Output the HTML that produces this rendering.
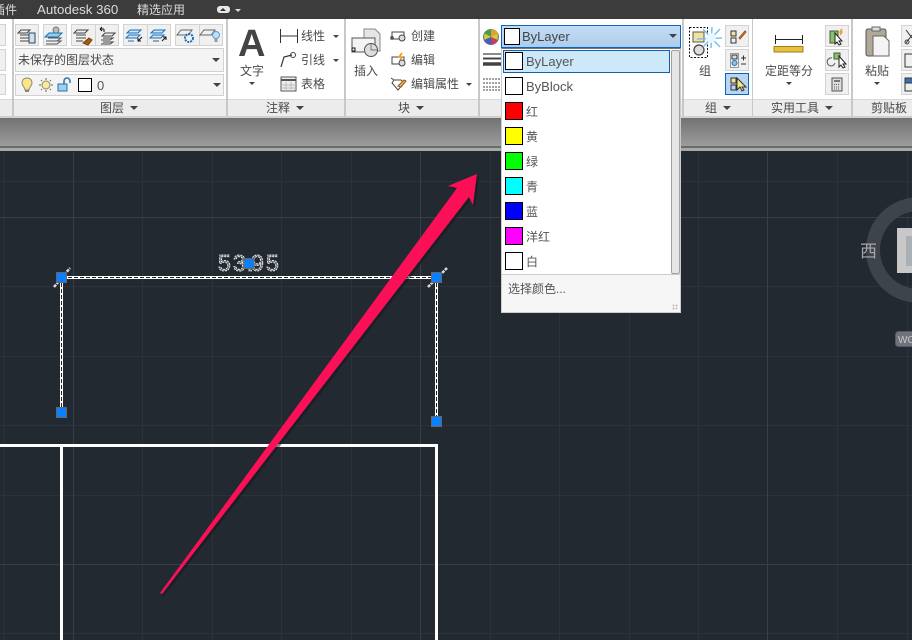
<!DOCTYPE html>
<html><head><meta charset="utf-8">
<style>
html,body{margin:0;padding:0;background:#222931}
#r{position:relative;width:912px;height:640px;overflow:hidden;background:#222931;font-family:"Liberation Sans","Noto Sans CJK SC",sans-serif;font-size:12px;color:#444}
.a{position:absolute;white-space:nowrap}
.t{position:absolute;white-space:nowrap;line-height:16px;color:#4a4a4a}
.b{position:absolute;box-sizing:border-box;background:#f0f0f0;border:1px solid #d2d2d2}
.it{position:absolute;left:526px;line-height:16px;color:#555;white-space:nowrap}
.l{font-size:13px}
.pt{position:absolute;top:100px;line-height:16px;color:#4a4a4a;white-space:nowrap}
.tri{position:absolute;width:0;height:0;border-left:4px solid transparent;border-right:4px solid transparent;border-top:4px solid #444}
.tri2{position:absolute;width:0;height:0;border-left:3px solid transparent;border-right:3px solid transparent;border-top:3px solid #444}
svg{position:absolute;left:0;top:0}
</style></head><body><div id="r">

<!-- title bar -->
<div class="a" style="left:0;top:0;width:912px;height:19px;background:#3c3c3c"></div>
<div class="a" style="left:-7px;top:2px;color:#dcdcdc;line-height:16px">插件</div>
<div class="a" style="left:37px;top:2px;color:#dcdcdc;line-height:16px;font-size:13.300px">Autodesk 360</div>
<div class="a" style="left:137px;top:2px;color:#dcdcdc;line-height:16px">精选应用</div>
<div class="a" style="left:217px;top:6px;width:13px;height:7px;background:#e8e8e8;border-radius:3px"></div>
<div class="tri" style="left:220px;top:8px;border-top:0;border-bottom:3px solid #333;border-left-width:3px;border-right-width:3px"></div>
<div class="tri2" style="left:235px;top:9px;border-top-color:#ddd"></div>

<!-- ribbon -->
<div class="a" style="left:0;top:19px;width:912px;height:99px;background:#fff"></div>
<div class="a" style="left:0;top:99px;width:912px;height:17px;background:#ececec;border-top:1px solid #d8d8d8;box-sizing:border-box"></div>
<div class="a" style="left:0;top:116px;width:912px;height:2px;background:#d0d0d0"></div>
<div class="a" style="left:0;top:118px;width:912px;height:28px;background:linear-gradient(#727272,#9c9c9c)"></div>
<div class="a" style="left:0;top:146px;width:912px;height:2px;background:#6a6a6a"></div>
<div class="a" style="left:0;top:148px;width:912px;height:3px;background:#a8a8a8"></div>
<!-- dividers -->
<div class="a" style="left:12px;top:19px;width:2px;height:97px;background:#c8c8c8"></div>
<div class="a" style="left:226px;top:19px;width:2px;height:97px;background:#c8c8c8"></div>
<div class="a" style="left:344px;top:19px;width:2px;height:97px;background:#c8c8c8"></div>
<div class="a" style="left:478px;top:19px;width:2px;height:97px;background:#c8c8c8"></div>
<div class="a" style="left:682px;top:19px;width:2px;height:97px;background:#c8c8c8"></div>
<div class="a" style="left:752px;top:19px;width:1px;height:97px;background:#c8c8c8"></div>
<div class="a" style="left:851px;top:19px;width:2px;height:97px;background:#c8c8c8"></div>

<!-- left cut buttons -->
<div class="b" style="left:-3px;top:24px;width:9px;height:22px"></div>
<div class="b" style="left:-3px;top:49px;width:9px;height:22px"></div>
<div class="b" style="left:-3px;top:74px;width:9px;height:21px"></div>

<!-- layer buttons -->
<div class="b" style="left:15px;top:24px;width:24px;height:22px"></div>
<div class="b" style="left:43px;top:24px;width:24px;height:22px"></div>
<div class="b" style="left:71px;top:24px;width:25px;height:22px"></div>
<div class="b" style="left:95px;top:24px;width:24px;height:22px"></div>
<div class="b" style="left:123px;top:24px;width:25px;height:22px"></div>
<div class="b" style="left:147px;top:24px;width:24px;height:22px"></div>
<div class="b" style="left:175px;top:24px;width:25px;height:22px"></div>
<div class="b" style="left:199px;top:24px;width:24px;height:22px"></div>
<div class="b" style="left:15px;top:48px;width:209px;height:24px;background:#f4f4f4"></div>
<div class="t" style="left:18px;top:52px">未保存的图层状态</div>
<div class="tri" style="left:212px;top:58px"></div>
<div class="b" style="left:15px;top:74px;width:209px;height:22px;background:#f4f4f4"></div>
<div class="a" style="left:78px;top:78px;width:14px;height:14px;box-sizing:border-box;border:1px solid #000;background:#fff"></div>
<div class="t l" style="left:97px;top:78px;color:#555">0</div>
<div class="tri" style="left:213px;top:83px"></div>
<div class="pt" style="left:100px">图层</div><div class="tri" style="left:130px;top:106px"></div>

<!-- annotation -->
<div class="a" style="left:238px;top:21px;font-size:38px;font-weight:bold;line-height:46px;color:#444">A</div>
<div class="t" style="left:240px;top:63px">文字</div><div class="tri2" style="left:249px;top:82px"></div>
<div class="t" style="left:301px;top:28px">线性</div><div class="tri2" style="left:333px;top:35px"></div>
<div class="t" style="left:301px;top:52px">引线</div><div class="tri2" style="left:333px;top:59px"></div>
<div class="t" style="left:301px;top:76px">表格</div>
<div class="pt" style="left:266px">注释</div><div class="tri" style="left:296px;top:106px"></div>

<!-- block -->
<div class="t" style="left:354px;top:63px">插入</div>
<div class="t" style="left:411px;top:28px">创建</div>
<div class="t" style="left:411px;top:52px">编辑</div>
<div class="t" style="left:411px;top:76px">编辑属性</div><div class="tri2" style="left:466px;top:83px"></div>
<div class="pt" style="left:398px">块</div><div class="tri" style="left:416px;top:106px"></div>

<!-- group -->
<div class="t" style="left:699px;top:63px">组</div>
<div class="b" style="left:725px;top:25px;width:24px;height:22px"></div>
<div class="b" style="left:725px;top:49px;width:24px;height:22px"></div>
<div class="b" style="left:725px;top:73px;width:24px;height:22px;background:#b8d6f2;border-color:#0a64c0"></div>
<div class="pt" style="left:705px">组</div><div class="tri" style="left:723px;top:106px"></div>

<!-- utilities -->
<div class="t" style="left:765px;top:63px">定距等分</div><div class="tri2" style="left:786px;top:82px"></div>
<div class="b" style="left:825px;top:25px;width:24px;height:22px"></div>
<div class="b" style="left:825px;top:49px;width:24px;height:22px"></div>
<div class="b" style="left:825px;top:73px;width:24px;height:22px"></div>
<div class="pt" style="left:771px">实用工具</div><div class="tri" style="left:825px;top:106px"></div>

<!-- clipboard -->
<div class="t" style="left:865px;top:63px">粘贴</div><div class="tri2" style="left:874px;top:82px"></div>
<div class="b" style="left:901px;top:25px;width:24px;height:22px"></div>
<div class="b" style="left:901px;top:49px;width:24px;height:22px"></div>
<div class="b" style="left:901px;top:73px;width:24px;height:22px"></div>
<div class="pt" style="left:871px">剪贴板</div>

<!-- ribbon icons -->
<svg width="912" height="152" viewBox="0 0 912 152" fill="none" stroke="#444" stroke-width="1">
 <!-- layer row -->
 <path d="M21 30h9l-3 3h-9zM20 35h9M20 38h9M20 41h9"/><rect x="29" y="33" width="6" height="10" fill="#cfe0f0" stroke="#345"/>
 <path d="M49 33h13l-4 4h-13z" fill="#8fd0f0" stroke="#1a70b8"/><path d="M48 38h13l-4 3h-11M48 41h13l-4 3h-11" stroke="#555"/><circle cx="56" cy="30" r="3" fill="#bbb" stroke="#777"/>
 <path d="M77 30h11l-3 3h-11zM76 35h10M76 38h10M76 41h7"/><path d="M83 43l6-5 3 2-4 5z" fill="#a85a10" stroke="#7a400a"/>
 <path d="M100 29h4M100 29l2-2M100 29l2 2M104 29v3" stroke="#111"/><path d="M105 33h10l-3 3h-10zM103 38h10l-3 2h-9M103 42h10l-3 2h-9"/>
 <path d="M130 30h11l-3 3h-11z" stroke="#1a70b8" fill="#cfe4f6"/><path d="M129 35h11l-3 3h-11z" stroke="#1a70b8" fill="#cfe4f6"/><path d="M128 41h6" stroke="#1a70b8"/><path d="M142 37l-4 4M138 38v3h3" stroke="#111"/>
 <path d="M154 30h11l-3 3h-11z" stroke="#1a70b8" fill="#cfe4f6"/><path d="M153 35h11l-3 3h-11z" stroke="#1a70b8" fill="#cfe4f6"/><path d="M153 41h6" stroke="#555"/><path d="M162 41l4-4M163 37h3v3" stroke="#111"/>
 <path d="M181 30h11l-4 5h-11z" stroke="#666"/><circle cx="189" cy="38" r="4" stroke="#1a70b8" stroke-dasharray="2 1" stroke-width="2"/>
 <path d="M204 30h11l-4 5h-11z" stroke="#666"/><circle cx="216" cy="35" r="3.500" fill="#bfe0f8" stroke="#5a9ad0"/><rect x="214.500" y="39" width="3" height="3" fill="#999" stroke="none"/>
 <!-- light / sun / lock -->
 <path d="M27 78c-4 0-5 3-5 5 0 3 3 4 3 7h4c0-3 3-4 3-7 0-2-1-5-5-5z" fill="#fbe58a" stroke="#8a8a60"/><rect x="25" y="90" width="4" height="2" fill="#888" stroke="none"/>
 <circle cx="46" cy="85" r="4" fill="#fbe9a0" stroke="#8a8a60"/><path d="M46 78v2M46 90v2M39 85h2M51 85h2M41 80l1 1M50 89l1 1M41 90l1-1M50 81l1-1" stroke="#666"/>
 <rect x="58" y="84" width="9" height="7" fill="#9fd0ef" stroke="#2a70a8"/><path d="M64 84v-3a3 3 0 0 1 6 0v2" stroke="#2a70a8" stroke-width="1.500"/>
 <!-- dim -->
 <path d="M280.500 29v14M297.500 29v14M281 36h16" stroke="#333"/>
 <path d="M281 67l3-10 8-2" stroke="#333" stroke-width="1.200"/><circle cx="293" cy="55" r="2.500"/>
 <rect x="281" y="77" width="15" height="14" fill="#eee" stroke="#555"/><path d="M281 80h15" stroke="#555" stroke-width="2"/><path d="M286 82v9M291 82v9M281 85h15M281 88h15" stroke="#bbb"/>
 <!-- insert -->
 <path d="M364 29h11l5 5v17h-16z" fill="#e6e6e6" stroke="#888"/>
 <rect x="352" y="38" width="23" height="14" fill="#f4f4f4" stroke="#555"/><rect x="352" y="48" width="3" height="3" fill="#fff" stroke="#111"/><circle cx="371" cy="50" r="6.500" fill="#ddd" stroke="#555"/><path d="M371 44v6h6" stroke="#777"/>
 <rect x="392" y="32" width="12" height="7" stroke="#444"/><circle cx="402" cy="38" r="3" fill="#ddd"/><rect x="391" y="37" width="2" height="2" fill="#fff" stroke="#111"/>
 <rect x="392" y="57" width="12" height="7" stroke="#444"/><circle cx="402" cy="63" r="3" fill="#ddd"/><path d="M402 53l-3 4h3l-2 3" stroke="#e89a10" stroke-width="1.500"/>
 <path d="M391 78l3 2M394 80h7l3 3-6 7-6-7z" stroke="#444"/><path d="M398 86l6-6 2 1-5 6z" fill="#f0c040" stroke="#a05020"/>
 <!-- color & line icons -->
 <circle cx="491" cy="37" r="7.500" fill="#d6c83a" stroke="#777"/><path d="M491 37L484 33A8 8 0 0 1 491 29.500z" fill="#40a050" stroke="none"/><path d="M491 37L484 40A8 8 0 0 0 491 44.500z" fill="#4060c0" stroke="none"/><path d="M491 37L498 40A8 8 0 0 1 491 44.500z" fill="#c04060" stroke="none"/><path d="M491 37L491 29.500A8 8 0 0 1 498 33z" fill="#e0a030" stroke="none"/>
 <path d="M483 54h18" stroke-width="1.300"/><path d="M483 58.500h18" stroke-width="2"/><path d="M483 64h18" stroke-width="3.500"/>
 <path d="M483 79h18M483 83h18M483 87h18M483 90h18" stroke-dasharray="2 1"/>
 <!-- group -->
 <rect x="689.500" y="27.500" width="18" height="30" stroke="#111" stroke-dasharray="2 1.500"/>
 <rect x="693" y="32" width="11" height="10" fill="#efe29a" stroke="#555"/><circle cx="699" cy="50" r="5" fill="#ddd" stroke="#444" stroke-width="1.300"/>
 <path d="M697 39l25-1M712 27l-1 21M703 29l17 18M720 29l-17 18" stroke="#7cc0ee" stroke-width="1.500"/><circle cx="711" cy="38" r="5" fill="#e8f6ff" stroke="none"/>
 <rect x="731" y="31" width="5" height="5" fill="#efe29a" stroke="#333"/><rect x="731" y="38" width="5" height="5" stroke="#333"/><path d="M739 38l6-7 1 1-6 7z" fill="#e0a030" stroke="#a05020"/>
 <rect x="730.500" y="53.500" width="8" height="14" stroke="#444" stroke-dasharray="1 1"/><rect x="732" y="55" width="5" height="4" fill="#ddd" stroke="#333"/><circle cx="734.500" cy="63" r="2.500" fill="#8cc0ea" stroke="#2a70a8"/><path d="M741 58h5M743.500 55.500v5M741 64h5" stroke="#333"/>
 <rect x="731" y="78" width="5" height="5" fill="#efe29a" stroke="#333"/><rect x="731" y="85" width="5" height="5" stroke="#333"/><path d="M737 78v12l3-3 2 4 2-1-2-3h4z" fill="#f5e97a" stroke="#333"/>
 <!-- util -->
 <path d="M775.500 35v9M802.500 35v9M775 39.500h27" stroke="#222"/><rect x="774" y="46.500" width="29" height="5.500" fill="#e8c040" stroke="#a08020"/>
 <rect x="830" y="31" width="8" height="12" fill="#8cc070" stroke="#406030"/><path d="M835 33v11l2-2 2 3 2-1-2-3h3z" fill="#fff" stroke="#222"/><path d="M842 29l-2 3h2l-2 3" stroke="#e89a10" stroke-width="1.300"/>
 <rect x="834" y="53" width="6" height="6" fill="#8cc070" stroke="#406030"/><path d="M832 58a4 4 0 1 0 3 5" stroke="#555"/><path d="M839 56v11l2-2 2 3 2-1-2-3h3z" fill="#fff" stroke="#222"/>
 <rect x="832" y="78" width="10" height="13" fill="#ddd" stroke="#555"/><rect x="834" y="80" width="6" height="2" fill="#777" stroke="none"/><path d="M834 84.500h6M834 87h6M834 89h6" stroke="#666" stroke-dasharray="1 1"/>
 <!-- paste -->
 <rect x="866" y="29" width="20" height="27" rx="2" fill="#b0a898" stroke="#555"/><rect x="872" y="27" width="8" height="4" fill="#ddd" stroke="#666"/>
 <path d="M873 36h11l5 5v15h-16z" fill="#f4f4f4" stroke="#666"/>
 <path d="M906 30l6 8M906 43l6-8" stroke="#333"/><circle cx="907" cy="42" r="2"/>
 <rect x="905" y="54" width="10" height="13" stroke="#333"/>
 <rect x="905" y="78" width="10" height="5" fill="#3a70a8" stroke="#333"/><rect x="905" y="83" width="10" height="8" fill="#eee" stroke="#333"/>
</svg>

<!-- canvas -->
<svg width="912" height="640" viewBox="0 0 912 640" style="top:0;left:0;pointer-events:none">
 <g stroke="#2c323c" stroke-width="1">
  <path d="M4 152V640M142.500 152V640M212.500 152V640M281.500 152V640M351.500 152V640M490.500 152V640M559.500 152V640M629.500 152V640M698.500 152V640M837.500 152V640M907.500 152V640"/>
  <path d="M0 181.500H912M0 286.500H912M0 356.500H912M0 425.500H912M0 495.500H912M0 633.500H912"/>
 </g>
 <g stroke="#383e4a" stroke-width="1">
  <path d="M73.500 152V640M420.500 152V640M767.500 152V640"/>
  <path d="M0 217.500H912M0 564.500H912"/>
 </g>
 <!-- compass -->
 <circle cx="919" cy="250" r="46" fill="none" stroke="#3e444c" stroke-width="14"/>
 <rect x="897" y="228" width="20" height="45" fill="#c8c8c8"/><rect x="906" y="236" width="10" height="30" fill="#a9b0b6"/>
 <rect x="895.500" y="331.500" width="24" height="15" rx="3" fill="#70727c" stroke="#565862"/>
 <text x="898" y="343" font-family="Liberation Sans" font-size="10" fill="#c8c8c8">WC</text>
 <text x="860" y="257" font-family="Liberation Sans,Noto Sans CJK SC" font-size="17" fill="#a8a8a8">西</text>

 <!-- white geometry -->
 <path d="M0 445.500H438M61.500 445V640M436.500 445V640" stroke="#fff" stroke-width="3" fill="none"/>

 <!-- dim text -->
 <text x="218 233 247 251 266" y="271" font-family="Liberation Sans" font-size="23" fill="#f0f0f0" fill-opacity=".35" stroke="#eeeeee" stroke-width=".9" stroke-dasharray="2 1">53.95</text>

 <!-- selected lines -->
 <path d="M62 277.500H436" stroke="#fff" stroke-width="3"/>
 <path d="M62 277.500H436" stroke="#222" stroke-width="1" stroke-dasharray="4 2"/>
 <path d="M61.500 277V412M436.500 277V421" stroke="#fff" stroke-width="3"/>
 <path d="M61.500 277V412M436.500 277V421" stroke="#222" stroke-width="1" stroke-dasharray="4 2"/>
 <path d="M54 287l16-19M428 287l19-19" stroke="#ddd" stroke-width="2.500" stroke-dasharray="3 1"/>
 <g fill="#0a80ff" stroke="#666" stroke-width="1">
  <rect x="56.500" y="272.500" width="10" height="10"/>
  <rect x="244" y="258.500" width="10" height="10"/>
  <rect x="431.500" y="272.500" width="10" height="10"/>
  <rect x="56.500" y="407.500" width="10" height="10"/>
  <rect x="431.500" y="416.500" width="10" height="10"/>
 </g>

 <!-- arrow -->
 <polygon points="162,596 164,596 471,199 475,207 479,176 450,188 459,190" fill="#15181c" opacity=".55"/>
 <polygon points="160,593 162,594 469,197 473,205 477,174 448,186 457,188" fill="#fb1058"/>
</svg>

<!-- color combo -->
<div class="a" style="left:501px;top:25px;width:180px;height:23px;box-sizing:border-box;background:linear-gradient(#c2dcf4,#aecdec);border:1px solid #0a64c0"></div>
<div class="a" style="left:504px;top:28px;width:16px;height:17px;box-sizing:border-box;border:1px solid #000;background:#fff"></div>
<div class="t l" style="left:522px;top:29px;color:#444">ByLayer</div>
<div class="tri" style="left:669px;top:34px"></div>

<!-- dropdown -->
<div class="a" style="left:501px;top:48px;width:180px;height:265px;box-sizing:border-box;background:#fff;border:1px solid #ccc;border-top:1px solid #777"></div>
<div class="a" style="left:503px;top:50px;width:167px;height:23px;box-sizing:border-box;background:#cde8f8;border:1px solid #1060b0"></div>
<div class="a" style="left:671px;top:50px;width:9px;height:224px;box-sizing:border-box;background:#e6e6e6;border:1px solid #a0a0a0;border-radius:2px"></div>
<div class="a" style="left:505px;top:52px;width:18px;height:18px;box-sizing:border-box;border:1px solid #000;background:#fff"></div>
<div class="a" style="left:505px;top:77px;width:18px;height:18px;box-sizing:border-box;border:1px solid #000;background:#fff"></div>
<div class="a" style="left:505px;top:102px;width:18px;height:18px;box-sizing:border-box;border:1px solid #000;background:#f00"></div>
<div class="a" style="left:505px;top:127px;width:18px;height:18px;box-sizing:border-box;border:1px solid #000;background:#ff0"></div>
<div class="a" style="left:505px;top:152px;width:18px;height:18px;box-sizing:border-box;border:1px solid #000;background:#0f0"></div>
<div class="a" style="left:505px;top:177px;width:18px;height:18px;box-sizing:border-box;border:1px solid #000;background:#0ff"></div>
<div class="a" style="left:505px;top:202px;width:18px;height:18px;box-sizing:border-box;border:1px solid #000;background:#00f"></div>
<div class="a" style="left:505px;top:227px;width:18px;height:18px;box-sizing:border-box;border:1px solid #000;background:#f0f"></div>
<div class="a" style="left:505px;top:252px;width:18px;height:18px;box-sizing:border-box;border:1px solid #000;background:#fff"></div>
<div class="it l" style="top:54px">ByLayer</div>
<div class="it l" style="top:79px">ByBlock</div>
<div class="it" style="top:104px">红</div>
<div class="it" style="top:129px">黄</div>
<div class="it" style="top:154px">绿</div>
<div class="it" style="top:179px">青</div>
<div class="it" style="top:204px">蓝</div>
<div class="it" style="top:229px">洋红</div>
<div class="it" style="top:254px">白</div>
<div class="a" style="left:502px;top:274px;width:178px;height:38px;box-sizing:border-box;background:#f6f6f6;border-top:1px solid #ccc"></div>
<div class="it" style="left:508px;top:281px">选择颜色...</div>
<div class="a" style="left:672px;top:304px;width:6px;height:6px;background:radial-gradient(#bbb 40%,transparent 45%) 0 0/3px 3px"></div>
</div></body></html>
